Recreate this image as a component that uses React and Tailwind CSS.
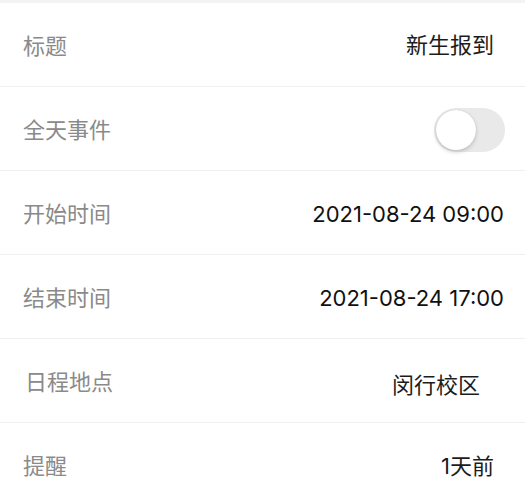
import React from "react";

function Row({ label, children, labelClass = "" }) {
  return (
    <div className="flex h-[84px] items-center justify-between border-b border-[#f0f0f0] pl-[23px] pr-[20px]">
      <span className={`text-[22px] leading-none text-[#8a8a8a] pt-[3px] ${labelClass}`}>{label}</span>
      {children}
    </div>
  );
}

export default function App() {
  return (
    <div className="w-[525px] h-[497px] overflow-hidden bg-white font-['Inter','Noto_Sans_CJK_SC',sans-serif]">
      <div className="h-[3px] bg-[#f2f3f5]" />
      <Row label="标题">
        <span className="mr-[11px] pt-[1px] text-[22px] leading-none text-[#1c1c1c]">新生报到</span>
      </Row>
      <Row label="全天事件">
        <div className="relative mt-[2px] h-[44px] w-[71px] rounded-full bg-[#e9e9ea]">
          <div className="absolute left-[2px] top-[2px] h-[40px] w-[40px] rounded-full bg-white shadow-[0_2px_4px_rgba(0,0,0,0.18),0_0_1px_rgba(0,0,0,0.15)]" />
        </div>
      </Row>
      <Row label="开始时间">
        <span className="mr-[1px] pt-[3px] text-[22px] leading-none text-[#111]">2021-08-24 09:00</span>
      </Row>
      <Row label="结束时间">
        <span className="mr-[1px] pt-[3px] text-[22px] leading-none text-[#111]">2021-08-24 17:00</span>
      </Row>
      <Row label="日程地点" labelClass="ml-[2px]">
        <span className="mr-[25px] pt-[8px] text-[22px] leading-none text-[#1c1c1c]">闵行校区</span>
      </Row>
      <Row label="提醒">
        <span className="mr-[11px] pt-[3px] text-[22px] leading-none text-[#1c1c1c]">1天前</span>
      </Row>
    </div>
  );
}
